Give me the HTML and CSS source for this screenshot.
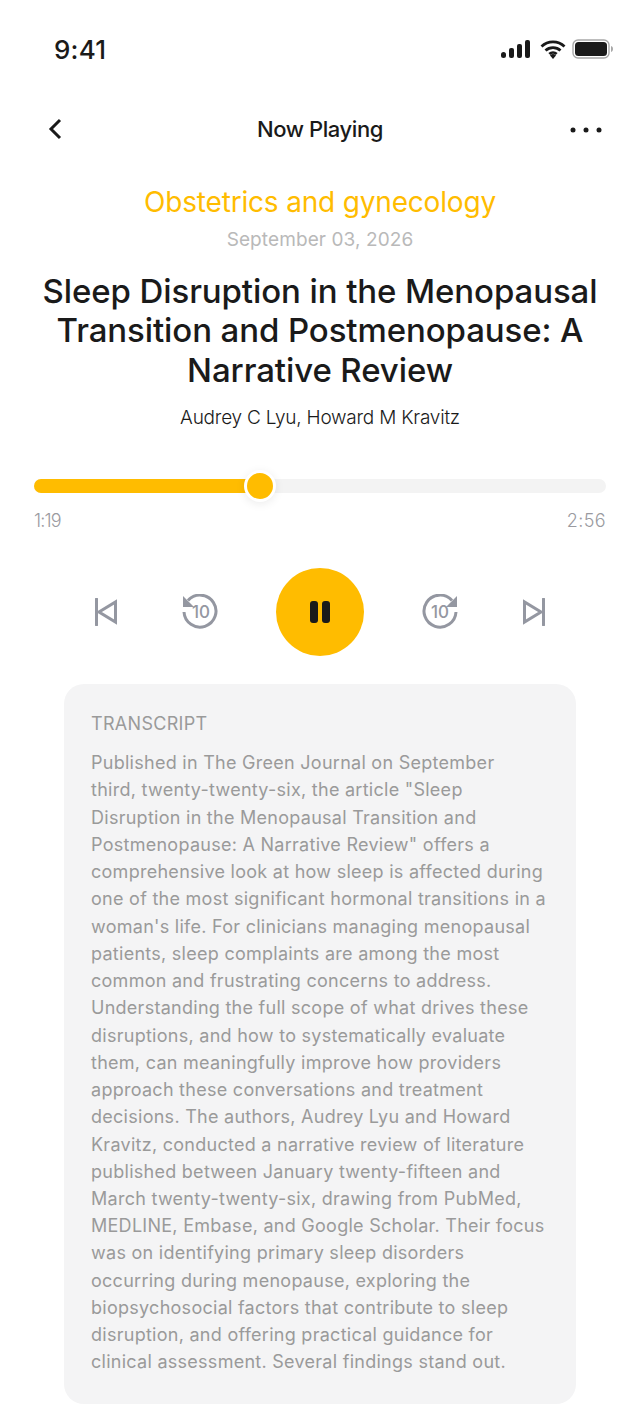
FILE: index.html
```html
<!DOCTYPE html>
<html lang="en">
<head>
    <meta charset="UTF-8">
    <meta name="viewport" content="width=device-width, initial-scale=1.0">
    <title>Now Playing</title>
    <link rel="stylesheet" href="styles.css">
</head>
<body>
    <div class="status-bar">
        <span class="time">9:41</span>
        <div class="status-icons">
            <svg width="30" height="18" viewBox="0 0 30 18"><rect x="0" y="12" width="5" height="6" rx="2.5" fill="#1a1a1a"/><rect x="8" y="8" width="5" height="10" rx="2" fill="#1a1a1a"/><rect x="16" y="4" width="5" height="14" rx="2" fill="#1a1a1a"/><rect x="24" y="0" width="5" height="18" rx="2" fill="#1a1a1a"/></svg>
            <svg width="26" height="19" viewBox="0 0 26 19"><path d="M1.5 6.5a16.5 16.5 0 0 1 23 0M5.5 10.5a11 11 0 0 1 15 0M9.3 14a5.5 5.5 0 0 1 7.4 0" fill="none" stroke="#1a1a1a" stroke-width="2.8"/><path d="M13 19l-3-3.6a4.6 4.6 0 0 1 6 0z" fill="#1a1a1a"/></svg>
            <svg width="42" height="20" viewBox="0 0 42 20"><rect x="1" y="1" width="36" height="18" rx="5" fill="none" stroke="#a8a8a8" stroke-width="1.4"/><rect x="3" y="3" width="32" height="14" rx="3.5" fill="#1a1a1a"/><path d="M39 7c1.500.4 2 1.600 2 3s-.5 2.600-2 3z" fill="#a8a8a8"/></svg>
        </div>
    </div>

    <div class="nav">
        <svg class="nav-back" width="16" height="24" viewBox="0 0 16 24"><path d="M13 3L4 12l9 9" fill="none" stroke="#1a1a1a" stroke-width="3"/></svg>
        <span class="nav-title">Now Playing</span>
        <svg class="nav-more" width="32" height="6" viewBox="0 0 32 6"><circle cx="3" cy="3" r="2.500" fill="#1a1a1a"/><circle cx="16" cy="3" r="2.500" fill="#1a1a1a"/><circle cx="29" cy="3" r="2.500" fill="#1a1a1a"/></svg>
    </div>

    <div class="article-head">
        <div class="category">Obstetrics and gynecology</div>
        <div class="date">September 03, 2026</div>
        <h1 class="title">Sleep Disruption in the Menopausal<br>Transition and Postmenopause: A<br>Narrative Review</h1>
        <div class="authors">Audrey C Lyu, Howard M Kravitz</div>
    </div>

    <div class="player">
        <div class="track">
            <div class="fill"></div>
            <div class="knob"></div>
        </div>
        <div class="times"><span>1:19</span><span>2:56</span></div>
    </div>

    <div class="controls">
        <svg class="ctl" width="22" height="28" viewBox="0 0 22 28"><path d="M1.500 1v26" stroke="#9497a1" stroke-width="3" stroke-linecap="round"/><path d="M20.500 4v20L4 14z" fill="none" stroke="#9497a1" stroke-width="3"/></svg>
        <svg class="ctl" width="36" height="36" viewBox="0 0 36 36"><path d="M6 6.500A16 16 0 1 1 2 18" fill="none" stroke="#9497a1" stroke-width="3"/><path d="M1 2v11h11z" fill="#9497a1"/><text x="19" y="24" class="ten">10</text></svg>
        <button class="pause"><span></span><span></span></button>
        <svg class="ctl" width="36" height="36" viewBox="0 0 36 36"><path d="M30 6.500A16 16 0 1 0 34 18" fill="none" stroke="#9497a1" stroke-width="3"/><path d="M35 2v11H24z" fill="#9497a1"/><text x="18" y="24" class="ten">10</text></svg>
        <svg class="ctl" width="22" height="28" viewBox="0 0 22 28"><path d="M20.500 1v26" stroke="#9497a1" stroke-width="3" stroke-linecap="round"/><path d="M1.500 4v20L18 14z" fill="none" stroke="#9497a1" stroke-width="3"/></svg>
    </div>

    <div class="transcript">
        <div class="transcript-label">TRANSCRIPT</div>
        <p>Published in The Green Journal on September<br>third, twenty-twenty-six, the article "Sleep<br>Disruption in the Menopausal Transition and<br>Postmenopause: A Narrative Review" offers a<br>comprehensive look at how sleep is affected during<br>one of the most significant hormonal transitions in a<br>woman's life. For clinicians managing menopausal<br>patients, sleep complaints are among the most<br>common and frustrating concerns to address.<br>Understanding the full scope of what drives these<br>disruptions, and how to systematically evaluate<br>them, can meaningfully improve how providers<br>approach these conversations and treatment<br>decisions. The authors, Audrey Lyu and Howard<br>Kravitz, conducted a narrative review of literature<br>published between January twenty-fifteen and<br>March twenty-twenty-six, drawing from PubMed,<br>MEDLINE, Embase, and Google Scholar. Their focus<br>was on identifying primary sleep disorders<br>occurring during menopause, exploring the<br>biopsychosocial factors that contribute to sleep<br>disruption, and offering practical guidance for<br>clinical assessment. Several findings stand out.</p>
    </div>
</body>
</html>
```

FILE: styles.css
```css
* { box-sizing: border-box; }
body { margin: 0; width: 640px; height: 1404px; overflow: hidden; background: white; color: #1a1a1a; font-family: Inter, "Noto Sans", sans-serif; }

.status-bar { display: flex; justify-content: space-between; align-items: center; height: 98px; padding: 0 26px 0 54px; }
.time { font-size: 26px; font-weight: 500; letter-spacing: 0.2px; }
.status-icons { display: flex; align-items: center; gap: 7px; }
.status-icons svg:last-child { margin-left: -1px; }
.status-icons svg:first-child { margin-right: 2px; }

.nav { display: grid; grid-template-columns: 1fr auto 1fr; align-items: center; height: 62px; padding: 0 38px; }
.nav-back { margin-left: 9px; }
.nav-title { font-size: 22px; font-weight: 500; letter-spacing: -0.4px; }
.nav-more { justify-self: end; margin-top: 1px; }

.article-head { text-align: center; padding-top: 24px; }
.category { font-size: 28px; line-height: 36px; color: #ffbc00; letter-spacing: -0.18px; }
.date { font-size: 19px; line-height: 24px; margin-top: 8px; color: #b9b9b9; letter-spacing: 0.1px; }
.title { font-size: 33px; line-height: 39.4px; font-weight: 500; letter-spacing: -0.1px; margin: 20px 0 0; }
.authors { font-size: 19px; line-height: 24px; font-weight: 300; margin-top: 16px; letter-spacing: -0.22px; }

.player { padding: 49px 34px 0; }
.track { position: relative; height: 14px; border-radius: 7px; background: #f3f3f3; }
.fill { width: 226px; height: 14px; border-radius: 7px; background: #ffbc00; }
.knob { position: absolute; left: 210px; top: -9px; width: 32px; height: 32px; border-radius: 50%; background: #ffbc00; border: 3px solid white; box-shadow: 0 2px 10px rgba(0, 0, 0, 0.08); }
.times { display: flex; justify-content: space-between; margin-top: 16px; font-size: 18px; line-height: 24px; font-weight: 300; color: #9a9aa0; }
.times span:first-child { letter-spacing: -0.8px; }
.times span:last-child { letter-spacing: 0.4px; }

.controls { display: flex; align-items: center; justify-content: center; margin-top: 35px; }
.ctl { flex: none; }
.controls .ctl:nth-child(1) { margin-right: 65px; }
.controls .ctl:nth-child(2) { margin-right: 58px; }
.controls .ctl:nth-child(4) { margin-left: 58px; }
.controls .ctl:nth-child(5) { margin-left: 65px; }
.ten { font-size: 17px; font-weight: 500; fill: #9497a1; text-anchor: middle; }
.pause { width: 88px; height: 88px; border: none; border-radius: 50%; background: #ffbc00; display: flex; align-items: center; justify-content: center; gap: 4px; padding: 0; }
.pause span { width: 8px; height: 22px; border-radius: 3px; background: #1a1a1a; }

.transcript { margin: 28px 64px 0; height: 720px; border-radius: 20px; background: #f4f4f5; padding: 28px 20px 0 27px; color: #9a9a9a; }
.transcript-label { font-size: 18px; line-height: 24px; letter-spacing: 0.3px; }
.transcript p { margin: 13px 0 0; font-size: 18px; line-height: 27.23px; letter-spacing: 0.27px; white-space: nowrap; }
```
